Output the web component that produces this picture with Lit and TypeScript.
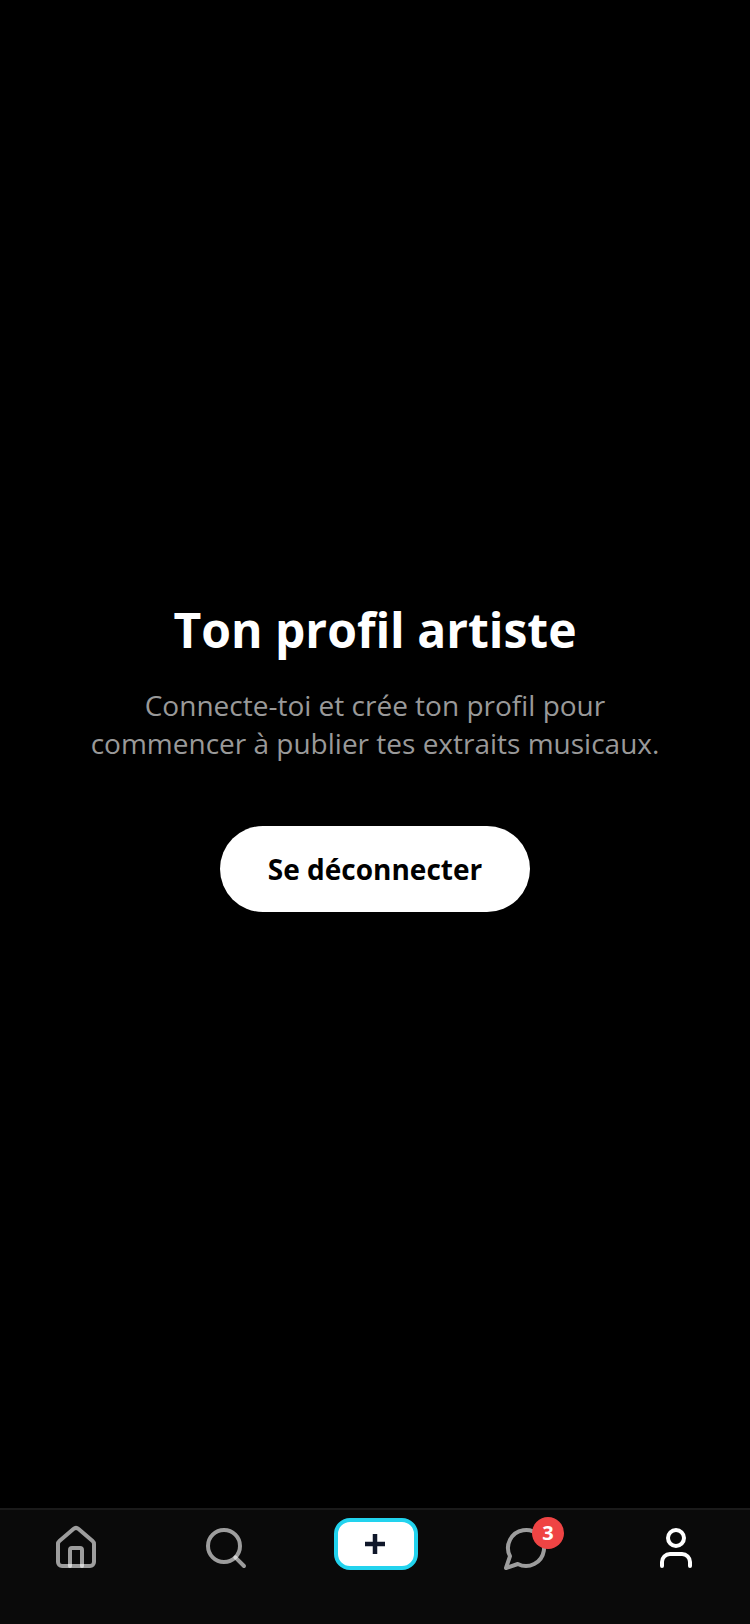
import { LitElement, html, css } from "lit";
import { customElement } from "lit/decorators.js";

@customElement("app-root")
export class AppRoot extends LitElement {
  static styles = css`
    :host { display: flex; flex-direction: column; width: 750px; height: 1624px; background: #000; font-family: "Open Sans", sans-serif; overflow: hidden; }
    .main { flex: 1; display: flex; flex-direction: column; align-items: center; justify-content: center; text-align: center; }
    h1 { margin: 0 0 23px; font-size: 48px; line-height: 66px; font-weight: 700; color: #fff; }
    p { margin: 0 0 63px; font-size: 28px; line-height: 38.5px; color: #999; font-weight: 400; }
    .btn { width: 310px; height: 86px; border-radius: 43px; border: 0; background: #fff; color: #000; font: 700 28px "Open Sans", sans-serif; }
    nav { height: 114px; border-top: 2px solid #1a1a1a; background: #0a0a0a; display: grid; grid-template-columns: repeat(5, 150px); padding-left: 1px; align-items: start; }
    .item { display: flex; justify-content: center; padding-top: 14px; position: relative; }
    svg { width: 48px; height: 48px; fill: none; stroke: rgba(255,255,255,.6); stroke-width: 2; stroke-linecap: round; stroke-linejoin: round; display: block; }
    svg.on { stroke: #fff; }
    .add { width: 84px; height: 52px; box-sizing: border-box; border: 4px solid #22d3ee; border-radius: 16px; background: #fff; display: flex; align-items: center; justify-content: center; margin-top: -6px; }
    .add svg { width: 20px; height: 20px; margin-right: 2px; stroke: #0f172a; stroke-width: 4.5; stroke-linecap: butt; }
    .badge { position: absolute; left: 81px; top: 7px; width: 32px; height: 32px; border-radius: 50%; background: #ef4444; color: #fff; font: 700 20px/32px "Open Sans", sans-serif; text-align: center; }
  `;
  render() {
    return html`
      <div class="main">
        <h1>Ton profil artiste</h1>
        <p>Connecte-toi et crée ton profil pour<br />commencer à publier tes extraits musicaux.</p>
        <button class="btn">Se déconnecter</button>
      </div>
      <nav>
        <div class="item"><svg viewBox="0 0 24 24"><path d="M15 21v-8a1 1 0 0 0-1-1h-4a1 1 0 0 0-1 1v8"/><path d="M3 10a2 2 0 0 1 .709-1.528l7-5.999a2 2 0 0 1 2.582 0l7 5.999A2 2 0 0 1 21 10v9a2 2 0 0 1-2 2H5a2 2 0 0 1-2-2z"/></svg></div>
        <div class="item"><svg viewBox="0 0 24 24"><path d="m21 21-4.34-4.34"/><circle cx="11" cy="11" r="8"/></svg></div>
        <div class="item"><div class="add"><svg viewBox="0 0 20 20"><path d="M0 10h20M10 0v20"/></svg></div></div>
        <div class="item"><svg viewBox="0 0 24 24"><path d="M7.9 20A9 9 0 1 0 4 16.1L2 22Z"/></svg><span class="badge">3</span></div>
        <div class="item"><svg class="on" viewBox="0 0 24 24"><path d="M19 21v-2a4 4 0 0 0-4-4H9a4 4 0 0 0-4 4v2"/><circle cx="12" cy="7" r="4"/></svg></div>
      </nav>
    `;
  }
}
